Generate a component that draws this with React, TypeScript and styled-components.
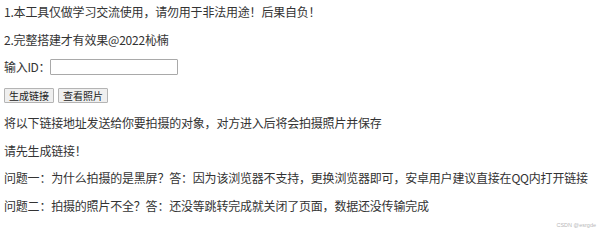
import React from "react";
import styled, { createGlobalStyle } from "styled-components";

const Global = createGlobalStyle`
  html, body { margin: 0; padding: 0; background: #fff; }
  body {
    font-family: "Microsoft YaHei", "Noto Sans CJK SC", "Noto Sans", sans-serif;
    color: #333;
  }
`;

const Page = styled.div`
  position: relative;
  width: 600px;
  height: 234px;
  box-sizing: border-box;
  padding: 4px 4px 0 4px;
  display: flex;
  flex-direction: column;
  gap: 11.5px;
  overflow: hidden;
`;

const Line = styled.p`
  margin: 0;
  font-size: 12px;
  line-height: 16px;
  height: 16px;
  white-space: nowrap;
  letter-spacing: -0.2px;
`;

const Row = styled.div<{ $h?: number }>`
  display: flex;
  align-items: center;
  height: ${(p) => p.$h ?? 16}px;
  font-size: 12px;
  gap: 4px;
`;

const Label = styled.span`
  font-size: 12px;
  line-height: 16px;
  width: 42px;
  white-space: nowrap;
  letter-spacing: -0.3px;
`;

const TextInput = styled.input`
  box-sizing: border-box;
  width: 128px;
  height: 16px;
  margin: 0;
  padding: 0 2px;
  border: 1px solid #a9a9a9;
  border-radius: 1px;
  font-size: 11px;
  outline: none;
`;

const Button = styled.button`
  box-sizing: border-box;
  height: 15px;
  padding: 0 4px;
  margin: 0;
  border: 1px solid #b4b4b4;
  background: #efefef;
  color: #222;
  font-family: inherit;
  font-size: 10px;
  line-height: 13px;
  border-radius: 1px;
`;

const Watermark = styled.span`
  position: absolute;
  right: 4px;
  bottom: 6px;
  font-family: "Liberation Sans", Arial, sans-serif;
  font-size: 5.5px;
  color: #b8b8b8;
`;

export default function App() {
  return (
    <>
      <Global />
      <Page>
        <Line>1.本工具仅做学习交流使用，请勿用于非法用途！后果自负！</Line>
        <Line>2.完整搭建才有效果@2022杺楠</Line>
        <Row>
          <Label>输入ID：</Label>
          <TextInput type="text" />
        </Row>
        <Row $h={17}>
          <Button>生成链接</Button>
          <Button>查看照片</Button>
        </Row>
        <Line>将以下链接地址发送给你要拍摄的对象，对方进入后将会拍摄照片并保存</Line>
        <Line>请先生成链接！</Line>
        <Line>问题一：为什么拍摄的是黑屏？答：因为该浏览器不支持，更换浏览器即可，安卓用户建议直接在QQ内打开链接</Line>
        <Line>问题二：拍摄的照片不全？答：还没等跳转完成就关闭了页面，数据还没传输完成</Line>
        <Watermark>CSDN @esrgde</Watermark>
      </Page>
    </>
  );
}
